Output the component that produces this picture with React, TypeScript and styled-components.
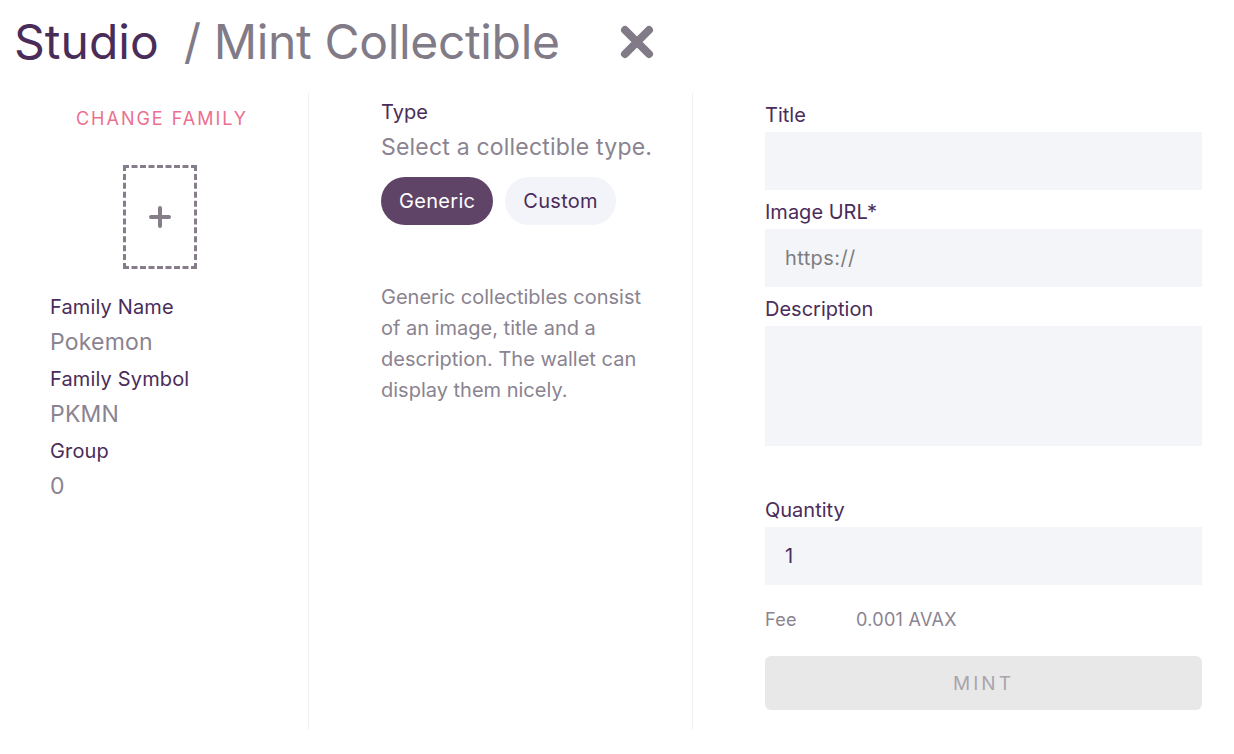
import React from "react";
import styled, { createGlobalStyle } from "styled-components";

const GlobalStyle = createGlobalStyle`
  html, body { margin: 0; padding: 0; background: #ffffff; }
  body { font-family: "Inter", "Noto Sans", sans-serif; -webkit-font-smoothing: antialiased; }
  * { box-sizing: border-box; }
`;

const Page = styled.div`
  width: 1234px;
  height: 754px;
  background: #fff;
  overflow: hidden;
`;

const Header = styled.header`
  height: 93px;
  display: flex;
  align-items: flex-start;
  padding: 13px 0 0 14px;
`;

const Heading = styled.h1`
  margin: 0;
  font-size: 48px;
  font-weight: 400;
  line-height: 58px;
  color: #4a2c59;
  display: flex;
  align-items: center;
`;

const SubHeading = styled.span`
  color: #817a87;
  margin-left: 25px;
  letter-spacing: -0.35px;
`;

const CloseButton = styled.button`
  margin-left: 60px;
  width: 34px;
  height: 34px;
  padding: 0;
  border: none;
  background: transparent;
  display: flex;
  align-items: center;
  justify-content: center;
  cursor: pointer;
`;

const Columns = styled.div`
  display: grid;
  grid-template-columns: 309px 384px 1fr;
  height: 637px;
`;

const Column = styled.section<{ $pad: string; $border?: boolean }>`
  padding: ${(p) => p.$pad};
  border-right: ${(p) => (p.$border ? "1px solid #f1f0f2" : "none")};
  display: flex;
  flex-direction: column;
`;

const ChangeFamily = styled.button`
  align-self: center;
  margin: 14px 0 0 4px;
  padding: 0;
  border: none;
  background: transparent;
  color: #ec6f90;
  font-family: inherit;
  font-size: 18px;
  letter-spacing: 2px;
  line-height: 24px;
  cursor: pointer;
`;

const DropBox = styled.div`
  align-self: center;
  margin-top: 34px;
  width: 74px;
  height: 104px;
  border: 3px dashed #857d8a;
  display: flex;
  align-items: center;
  justify-content: center;
`;

const InfoList = styled.dl`
  margin: 25px 0 0;
  display: flex;
  flex-direction: column;
`;

const InfoLabel = styled.dt`
  font-size: 20px;
  letter-spacing: 0.15px;
  line-height: 26px;
  color: #4a2c59;
  margin-top: 8px;
  &:first-child { margin-top: 0; }
`;

const InfoValue = styled.dd`
  margin: 6px 0 0;
  font-size: 23px;
  letter-spacing: 0.2px;
  line-height: 32px;
  color: #8a8390;
`;

const Label = styled.div`
  font-size: 20px;
  line-height: 26px;
  color: #4a2c59;
`;

const Hint = styled.div`
  margin-top: 6px;
  font-size: 23px;
  letter-spacing: 0.2px;
  line-height: 32px;
  color: #8a8390;
`;

const TypeRow = styled.div`
  display: flex;
  gap: 12px;
  margin-top: 14px;
`;

const Pill = styled.button<{ $active?: boolean }>`
  height: 48px;
  padding: 0 18px;
  border-radius: 24px;
  border: none;
  font-family: inherit;
  font-size: 20px;
  letter-spacing: 0.3px;
  background: ${(p) => (p.$active ? "#5f4468" : "#f3f4f9")};
  color: ${(p) => (p.$active ? "#ffffff" : "#4a2c59")};
  cursor: pointer;
`;

const TypeDesc = styled.p`
  margin: 57px 0 0;
  width: 275px;
  font-size: 20px;
  line-height: 31px;
  color: #8a8390;
`;

const Field = styled.div<{ $gap?: number }>`
  display: flex;
  flex-direction: column;
  margin-top: ${(p) => p.$gap ?? 9}px;
`;

const FieldLabel = styled.label`
  font-size: 20px;
  line-height: 26px;
  color: #4a2c59;
  margin-bottom: 4px;
`;

const Input = styled.input`
  height: 58px;
  width: 100%;
  border: none;
  outline: none;
  background: #f4f5f9;
  padding: 0 20px;
  font-family: inherit;
  font-size: 20px;
  letter-spacing: 0.4px;
  color: #4a2c59;
  &::placeholder { color: #7d7d80; }
`;

const TextArea = styled.textarea`
  height: 120px;
  width: 100%;
  border: none;
  outline: none;
  resize: none;
  background: #f4f5f9;
  padding: 16px 20px;
  font-family: inherit;
  font-size: 20px;
  color: #4a2c59;
`;

const FeeRow = styled.div`
  display: flex;
  margin-top: 24px;
  font-size: 18px;
  letter-spacing: 0.3px;
  line-height: 22px;
  color: #8a8390;
`;

const FeeKey = styled.span`
  width: 91px;
`;

const MintButton = styled.button`
  margin-top: 25px;
  height: 54px;
  width: 100%;
  border: none;
  border-radius: 6px;
  background: #e8e8e8;
  color: #a9a5ac;
  font-family: inherit;
  font-size: 19px;
  letter-spacing: 3px;
`;

const RightInner = styled.div`
  width: 437px;
  display: flex;
  flex-direction: column;
`;

export default function App() {
  return (
    <Page>
      <GlobalStyle />
      <Header>
        <Heading>
          Studio
          <SubHeading>/ Mint Collectible</SubHeading>
          <CloseButton aria-label="Close">
            <svg width="34" height="34" viewBox="0 0 34 34">
              <path d="M5 5 L29 29 M29 5 L5 29" stroke="#817a87" strokeWidth="8" strokeLinecap="round" />
            </svg>
          </CloseButton>
        </Heading>
      </Header>
      <Columns>
        <Column $pad="0 38px 0 50px" $border>
          <ChangeFamily>CHANGE FAMILY</ChangeFamily>
          <DropBox>
            <svg width="22" height="22" viewBox="0 0 22 22">
              <path d="M11 2 V20 M2 11 H20" stroke="#857d8a" strokeWidth="4" strokeLinecap="round" />
            </svg>
          </DropBox>
          <InfoList>
            <InfoLabel>Family Name</InfoLabel>
            <InfoValue>Pokemon</InfoValue>
            <InfoLabel>Family Symbol</InfoLabel>
            <InfoValue>PKMN</InfoValue>
            <InfoLabel>Group</InfoLabel>
            <InfoValue>0</InfoValue>
          </InfoList>
        </Column>
        <Column $pad="6px 0 0 72px" $border>
          <Label>Type</Label>
          <Hint>Select a collectible type.</Hint>
          <TypeRow>
            <Pill $active>Generic</Pill>
            <Pill>Custom</Pill>
          </TypeRow>
          <TypeDesc>
            Generic collectibles consist of an image, title and a description. The wallet can display them nicely.
          </TypeDesc>
        </Column>
        <Column $pad="9px 0 0 72px">
          <RightInner>
            <Field $gap={0}>
              <FieldLabel>Title</FieldLabel>
              <Input />
            </Field>
            <Field>
              <FieldLabel>Image URL*</FieldLabel>
              <Input placeholder="https://" />
            </Field>
            <Field>
              <FieldLabel>Description</FieldLabel>
              <TextArea />
            </Field>
            <Field $gap={51}>
              <FieldLabel>Quantity</FieldLabel>
              <Input defaultValue="1" />
            </Field>
            <FeeRow>
              <FeeKey>Fee</FeeKey>
              <span>0.001 AVAX</span>
            </FeeRow>
            <MintButton disabled>MINT</MintButton>
          </RightInner>
        </Column>
      </Columns>
    </Page>
  );
}
